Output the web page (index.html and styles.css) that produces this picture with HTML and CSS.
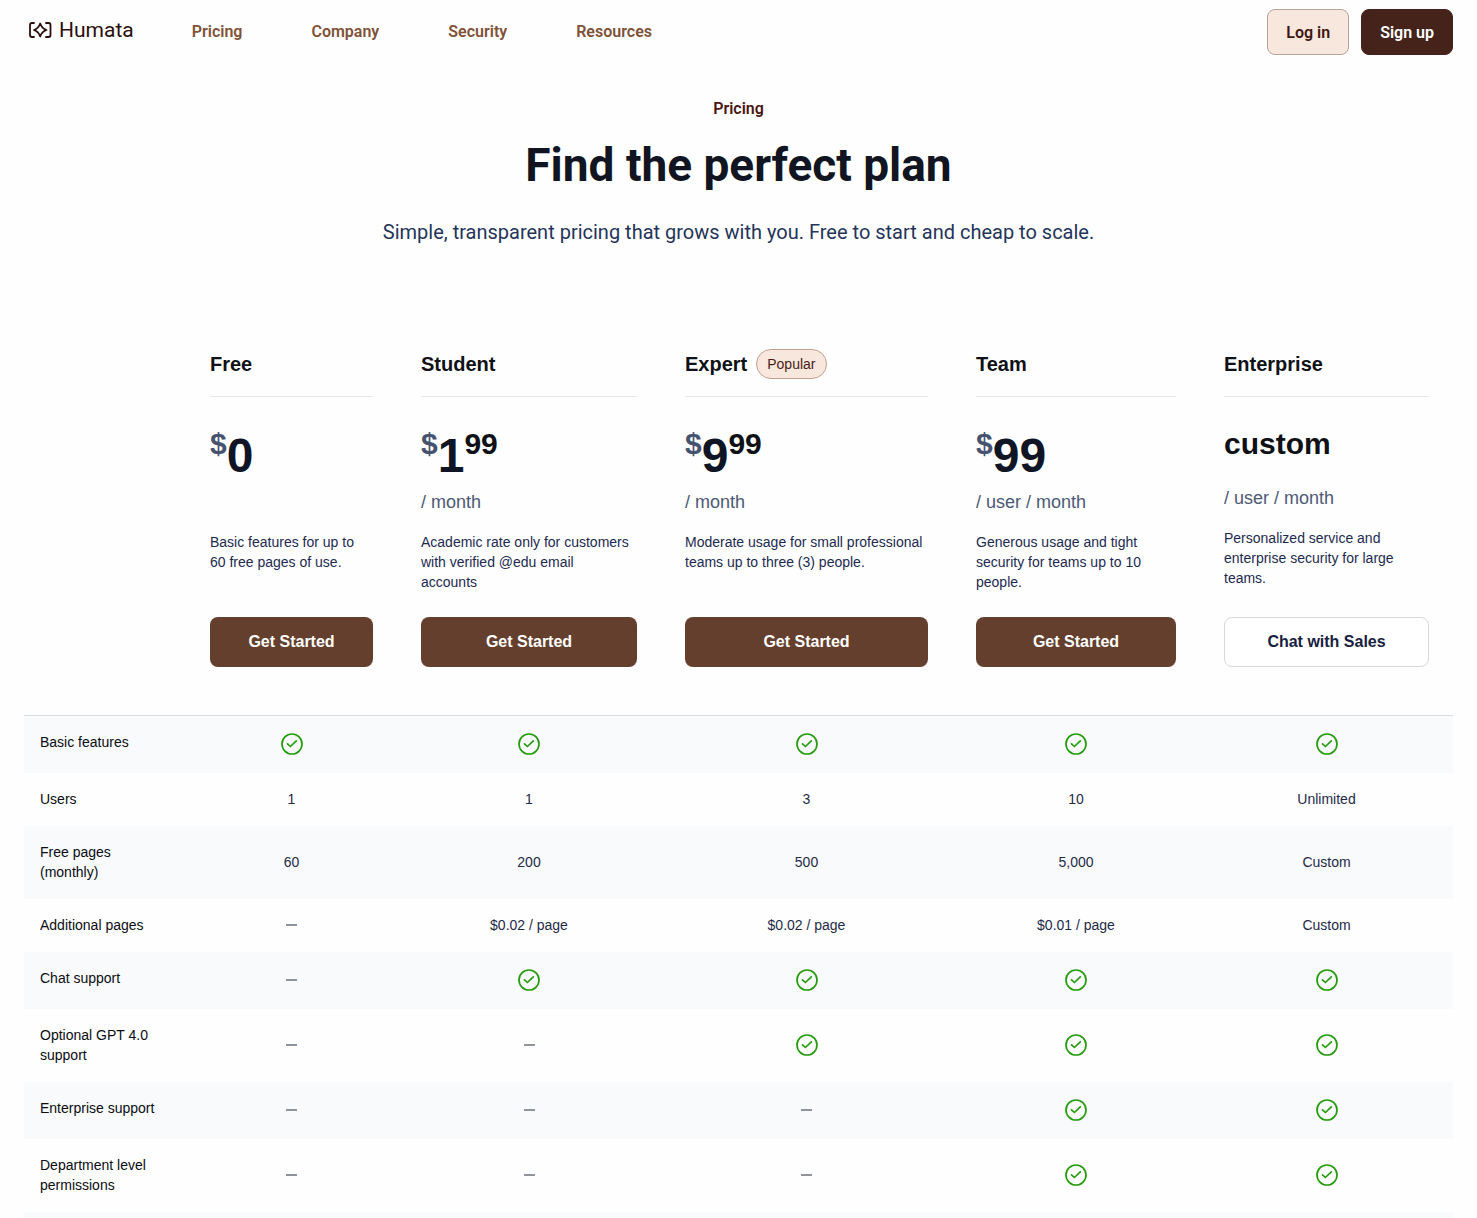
FILE: index.html
```html
<!DOCTYPE html>
<html lang="en">
<head>
    <meta charset="UTF-8">
    <meta name="viewport" content="width=device-width, initial-scale=1.0">
    <title>Pricing - Humata</title>
    <link rel="stylesheet" href="styles.css">
</head>
<body>
    <svg class="sprite" aria-hidden="true">
        <symbol id="check" viewBox="0 0 24 24">
            <circle cx="12" cy="12" r="10"/>
            <path d="M7.500 11.800l2.900 2.700 5.900-5.700"/>
        </symbol>
    </svg>

    <header class="header">
        <a class="logo" href="#">
            <svg viewBox="0 0 24 16" aria-hidden="true">
                <path d="M6 1H4Q2 1 2 3V13Q2 15 4 15H6M18 1h2.500Q22.500 1 22.500 3V13Q22.500 15 20.500 15H18"/>
                <path d="M12.200 1.500C13.200 4.500 15.500 7 18.500 8C15.500 9 13.200 11.500 12.200 14.500C11.200 11.500 9 9 6 8C9 7 11.200 4.500 12.200 1.500Z"/>
            </svg>
            <span>Humata</span>
        </a>
        <nav class="nav">
            <a href="#">Pricing</a>
            <a href="#">Company</a>
            <a href="#">Security</a>
            <a href="#">Resources</a>
        </nav>
        <div class="account">
            <button class="btn-login" type="button">Log in</button>
            <button class="btn-signup" type="button">Sign up</button>
        </div>
    </header>

    <main>
        <section class="hero">
            <p class="eyebrow">Pricing</p>
            <h1>Find the perfect plan</h1>
            <p class="subtitle">Simple, transparent pricing that grows with you. Free to start and cheap to scale.</p>
        </section>

        <div class="plans">
            <table>
                <colgroup>
                    <col class="col-label">
                    <col class="col-free">
                    <col class="col-student">
                    <col class="col-expert">
                    <col class="col-team">
                    <col class="col-enterprise">
                </colgroup>
                <thead>
                    <tr>
                        <td></td>
                        <th scope="col"><div class="plan-name">Free</div></th>
                        <th scope="col"><div class="plan-name">Student</div></th>
                        <th scope="col"><div class="plan-name">Expert <span class="badge">Popular</span></div></th>
                        <th scope="col"><div class="plan-name">Team</div></th>
                        <th scope="col"><div class="plan-name">Enterprise</div></th>
                    </tr>
                    <tr class="plan-info">
                        <td></td>
                        <td>
                            <div class="price"><span class="currency">$</span><span class="amount">0</span></div>
                            <div class="period"></div>
                            <p>Basic features for up to<br>60 free pages of use.</p>
                        </td>
                        <td>
                            <div class="price"><span class="currency">$</span><span class="amount">1</span><span class="cents">99</span></div>
                            <div class="period">/ month</div>
                            <p>Academic rate only for customers with verified @edu email<br>accounts</p>
                        </td>
                        <td>
                            <div class="price"><span class="currency">$</span><span class="amount">9</span><span class="cents">99</span></div>
                            <div class="period">/ month</div>
                            <p>Moderate usage for small professional teams up to three (3) people.</p>
                        </td>
                        <td>
                            <div class="price"><span class="currency">$</span><span class="amount">99</span></div>
                            <div class="period">/ user / month</div>
                            <p>Generous usage and tight security for teams up to 10 people.</p>
                        </td>
                        <td>
                            <div class="price price-custom">custom</div>
                            <div class="period">/ user / month</div>
                            <p>Personalized service and enterprise security for large teams.</p>
                        </td>
                    </tr>
                    <tr class="plan-action">
                        <td></td>
                        <td><button type="button">Get Started</button></td>
                        <td><button type="button">Get Started</button></td>
                        <td><button type="button">Get Started</button></td>
                        <td><button type="button">Get Started</button></td>
                        <td><button class="btn-sales" type="button">Chat with Sales</button></td>
                    </tr>
                </thead>
                <tbody>
                    <tr>
                        <th scope="row">Basic features</th>
                        <td><svg class="check"><use href="#check"/></svg></td>
                        <td><svg class="check"><use href="#check"/></svg></td>
                        <td><svg class="check"><use href="#check"/></svg></td>
                        <td><svg class="check"><use href="#check"/></svg></td>
                        <td><svg class="check"><use href="#check"/></svg></td>
                    </tr>
                    <tr>
                        <th scope="row">Users</th>
                        <td>1</td>
                        <td>1</td>
                        <td>3</td>
                        <td>10</td>
                        <td>Unlimited</td>
                    </tr>
                    <tr>
                        <th scope="row">Free pages (monthly)</th>
                        <td>60</td>
                        <td>200</td>
                        <td>500</td>
                        <td>5,000</td>
                        <td>Custom</td>
                    </tr>
                    <tr>
                        <th scope="row">Additional pages</th>
                        <td><span class="dash"></span></td>
                        <td>$0.02 / page</td>
                        <td>$0.02 / page</td>
                        <td>$0.01 / page</td>
                        <td>Custom</td>
                    </tr>
                    <tr>
                        <th scope="row">Chat support</th>
                        <td><span class="dash"></span></td>
                        <td><svg class="check"><use href="#check"/></svg></td>
                        <td><svg class="check"><use href="#check"/></svg></td>
                        <td><svg class="check"><use href="#check"/></svg></td>
                        <td><svg class="check"><use href="#check"/></svg></td>
                    </tr>
                    <tr>
                        <th scope="row">Optional GPT 4.0 support</th>
                        <td><span class="dash"></span></td>
                        <td><span class="dash"></span></td>
                        <td><svg class="check"><use href="#check"/></svg></td>
                        <td><svg class="check"><use href="#check"/></svg></td>
                        <td><svg class="check"><use href="#check"/></svg></td>
                    </tr>
                    <tr>
                        <th scope="row">Enterprise support</th>
                        <td><span class="dash"></span></td>
                        <td><span class="dash"></span></td>
                        <td><span class="dash"></span></td>
                        <td><svg class="check"><use href="#check"/></svg></td>
                        <td><svg class="check"><use href="#check"/></svg></td>
                    </tr>
                    <tr>
                        <th scope="row">Department level permissions</th>
                        <td><span class="dash"></span></td>
                        <td><span class="dash"></span></td>
                        <td><span class="dash"></span></td>
                        <td><svg class="check"><use href="#check"/></svg></td>
                        <td><svg class="check"><use href="#check"/></svg></td>
                    </tr>
                    <tr class="table-end">
                        <td colspan="6"></td>
                    </tr>
                </tbody>
            </table>
        </div>
    </main>
</body>
</html>
```

FILE: styles.css
```css
* {
    box-sizing: border-box;
}
body {
    margin: 0;
    background-color: #fefefe;
    color: #0f1117;
    font-family: "Liberation Sans", Arial, sans-serif;
    font-size: 14px;
    line-height: 20px;
}
h1, p {
    margin: 0;
}
a {
    text-decoration: none;
}
button {
    font-family: inherit;
    font-size: 16px;
    font-weight: bold;
    cursor: pointer;
}
.sprite {
    display: none;
}

/* Header */
.header {
    display: flex;
    align-items: center;
    height: 64px;
    padding: 0 24px;
    font-family: Roboto, sans-serif;
    font-size: 16px;
    font-weight: 600;
}
.logo {
    display: flex;
    align-items: center;
    gap: 7px;
    margin: 0 58px 4px 4px;
    color: #2b0f0c;
    font-size: 21px;
    font-weight: 400;
}
.logo svg {
    width: 24px;
    height: 16px;
    fill: none;
    stroke: currentColor;
    stroke-width: 1.8;
    stroke-linejoin: round;
    stroke-linecap: round;
}
.nav {
    display: flex;
    gap: 69px;
}
.nav a {
    color: #805238;
}
.account {
    display: flex;
    gap: 12px;
    margin-left: auto;
}
.account button {
    height: 46px;
    padding: 0 18px;
    border: 1px solid #45231b;
    border-radius: 8px;
    font-weight: 600;
}
.account .btn-login {
    background-color: #f8e7dd;
    border-color: #b9a298;
    color: #401611;
}
.account .btn-signup {
    background-color: #45231b;
    color: #fff;
}

/* Hero */
.hero {
    padding: 33px 24px 0;
    font-family: Roboto, sans-serif;
    text-align: center;
}
.eyebrow {
    color: #4a1812;
    font-size: 16px;
    font-weight: 600;
    line-height: 24px;
}
h1 {
    margin-top: 14px;
    color: #111522;
    font-size: 46px;
    font-weight: 700;
    line-height: 60px;
}
.subtitle {
    margin-top: 22px;
    color: #25345a;
    font-size: 20px;
    line-height: 30px;
}

/* Plans table */
.plans {
    padding: 102px 24px 0;
}
table {
    width: 100%;
    table-layout: fixed;
    border-collapse: collapse;
}
.col-label {
    width: 162px;
}
.col-free {
    width: 211px;
}
.col-student {
    width: 264px;
}
.col-expert {
    width: 291px;
}
.col-team {
    width: 248px;
}
.col-enterprise {
    width: 253px;
}
thead th, thead td {
    padding: 0 24px;
    text-align: left;
    vertical-align: top;
}
.plan-name {
    display: flex;
    align-items: center;
    gap: 9px;
    height: 48px;
    padding-bottom: 17px;
    border-bottom: 1px solid #e6e8ea;
    font-size: 20px;
}
.badge {
    padding: 4px 10px;
    border: 1px solid #c2a091;
    border-radius: 15px;
    background-color: #f8e7dd;
    color: #4a1c15;
    font-size: 14px;
    font-weight: normal;
}
.plan-info td {
    padding-top: 29px;
    padding-bottom: 25px;
}
.price {
    display: flex;
    margin-bottom: 2px;
    font-size: 30px;
    font-weight: bold;
    line-height: 36px;
}
.currency {
    color: #46526f;
}
.amount {
    color: #0f1524;
    font-size: 48px;
    line-height: 60px;
}
.price-custom {
    margin-bottom: 22px;
}
.period {
    height: 28px;
    color: #4d5975;
    font-size: 18px;
    line-height: 28px;
}
.plan-info p {
    margin-top: 16px;
    color: #1d2a50;
}
.plan-action td {
    padding-bottom: 48px;
}
.plan-action button {
    display: block;
    width: 100%;
    height: 50px;
    border: none;
    border-radius: 8px;
    background-color: #643f2d;
    color: #fff;
}
.plan-action .btn-sales {
    border: 1px solid #d5d8dc;
    background-color: #fff;
    color: #17213f;
}
tbody tr {
    border-top: 1px solid transparent;
}
tbody tr:first-child {
    border-top-color: #d9dddf;
}
tbody tr:nth-child(odd) {
    background-color: #f8fafb;
}
tbody th, tbody td {
    padding: 16px;
    text-align: center;
}
tbody th {
    color: #0b0d12;
    font-weight: normal;
    text-align: left;
    vertical-align: top;
}
tbody td {
    color: #1f2a48;
}
.check {
    display: block;
    width: 24px;
    height: 24px;
    margin: 0 auto;
    fill: none;
    stroke: #259b0e;
    stroke-width: 1.7;
    stroke-linecap: round;
    stroke-linejoin: round;
}
.dash {
    display: block;
    width: 11px;
    height: 2px;
    margin: 0 auto;
    background-color: #8f949c;
}
.table-end td {
    padding: 3px;
}
```
